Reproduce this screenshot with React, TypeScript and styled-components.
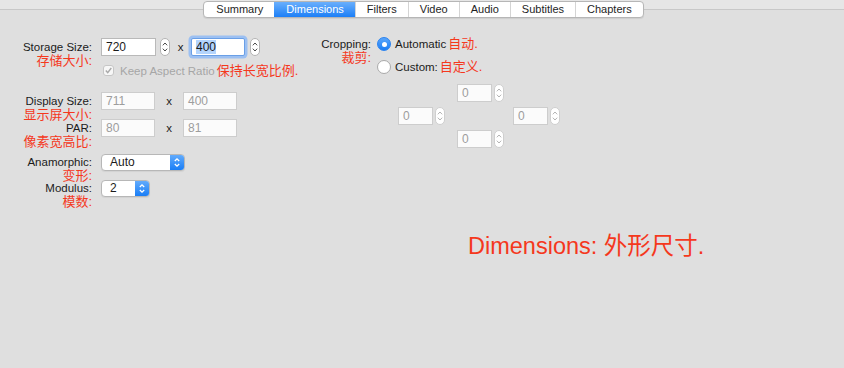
import React from 'react'
import styled, { createGlobalStyle } from 'styled-components'

const RED = '#f5381d'
const FONT = `"Liberation Sans", Arial, "Noto Sans CJK SC", sans-serif`

const GlobalStyle = createGlobalStyle`
  html, body {
    margin: 0;
    padding: 0;
  }
  body {
    background: #dfdfdf;
    font-family: ${FONT};
  }
`

const Window = styled.div`
  width: 844px;
  height: 368px;
  overflow: hidden;
  background: #dfdfdf;
  display: flex;
  flex-direction: column;
`

const TabStrip = styled.div`
  height: 19px;
  box-sizing: border-box;
  padding: 1px 0 0 3px;
  display: flex;
  justify-content: center;
  background: linear-gradient(
    to bottom,
    #e6e6e6 0,
    #e6e6e6 9px,
    #c8c8c8 9px,
    #c8c8c8 10px,
    #dfdfdf 10px
  );
`

const Segmented = styled.div`
  display: flex;
  height: 17px;
  box-sizing: border-box;
  border: 1px solid #b6b6b6;
  border-radius: 4px;
  background: #fff;
  overflow: hidden;
  box-shadow: 0 1px 1px rgba(0, 0, 0, 0.08);
`

const Tab = styled.div<{ $active?: boolean; $first?: boolean }>`
  padding: 0 11px;
  font-size: 11px;
  line-height: 15px;
  white-space: nowrap;
  color: ${p => (p.$active ? '#fff' : '#1e1e1e')};
  background: ${p =>
    p.$active ? 'linear-gradient(to bottom, #6aaffc, #1c7ff7)' : 'transparent'};
  border-left: 1px solid ${p => (p.$first || p.$active ? 'transparent' : '#d4d4d4')};
`

const Body = styled.div`
  display: flex;
  align-items: flex-start;
`

const FormColumn = styled.div`
  width: 310px;
  padding-top: 19px;
  display: flex;
  flex-direction: column;
`

const Row = styled.div<{ $mt?: number }>`
  display: flex;
  align-items: flex-start;
  margin-top: ${p => p.$mt ?? 0}px;
`

const LabelCell = styled.div<{ $w: number; $h: number; $mr: number }>`
  width: ${p => p.$w}px;
  height: ${p => p.$h}px;
  margin-right: ${p => p.$mr}px;
  flex-shrink: 0;
  text-align: right;
  white-space: nowrap;
`

const Label = styled.div<{ $h: number }>`
  font-size: 11.5px;
  line-height: ${p => p.$h}px;
  color: #1b1b1b;
`

const Caption = styled.div`
  margin-top: -2px;
  font-size: 13px;
  line-height: 14px;
  color: ${RED};
`

const Field = styled.div`
  display: flex;
  flex-direction: column;
`

const FieldLine = styled.div`
  display: flex;
  align-items: center;
  height: 18px;
`

const TextBox = styled.div<{ $w: number; $disabled?: boolean; $focused?: boolean }>`
  width: ${p => p.$w}px;
  height: 18px;
  box-sizing: border-box;
  padding-left: 4px;
  border: 1px solid ${p => (p.$disabled ? '#cdcdcd' : p.$focused ? '#6a9fe6' : '#b9b9b9')};
  background: ${p => (p.$disabled ? '#fbfbfb' : '#fff')};
  box-shadow: ${p => (p.$focused ? '0 0 0 2.5px #9cc0f2' : 'none')};
  border-radius: ${p => (p.$focused ? '2px' : '0')};
  font-size: 12px;
  line-height: 16px;
  color: ${p => (p.$disabled ? '#9d9d9d' : '#1b1b1b')};
`

const Selected = styled.span`
  background: #b3d4fd;
`

const StepperShell = styled.span<{ $ml: number; $disabled?: boolean }>`
  display: inline-flex;
  width: 10px;
  height: 18px;
  box-sizing: border-box;
  margin-left: ${p => p.$ml}px;
  border: 1px solid ${p => (p.$disabled ? '#cfcfcf' : '#b4b4b4')};
  border-radius: 5px;
  background: #fff;
  color: ${p => (p.$disabled ? '#b4b4b4' : '#4a4a4a')};
`

const Stepper = ({ ml, disabled }: { ml: number; disabled?: boolean }) => (
  <StepperShell $ml={ml} $disabled={disabled}>
    <svg width="8" height="16" viewBox="0 0 8 16" fill="none" stroke="currentColor" strokeWidth="1">
      <path d="M1.8 6.3 L4 4 L6.2 6.3" />
      <path d="M1.8 9.7 L4 12 L6.2 9.7" />
    </svg>
  </StepperShell>
)

const XSep = styled.span<{ $w: number }>`
  width: ${p => p.$w}px;
  text-align: center;
  font-size: 11.5px;
  color: #1b1b1b;
`

const CheckLine = styled.div`
  display: flex;
  align-items: center;
  height: 13px;
  margin-top: 8px;
  white-space: nowrap;
`

const CheckBox = styled.span`
  display: inline-flex;
  width: 11px;
  height: 11px;
  box-sizing: border-box;
  margin-left: 2px;
  border: 1px solid #c6c6c6;
  border-radius: 3px;
  background: #f7f7f7;
  color: #a9a9a9;
`

const MutedText = styled.span`
  margin-left: 6px;
  font-size: 11.5px;
  color: #a6a6a6;
`

const RedText = styled.span`
  margin-left: 2px;
  font-size: 13px;
  line-height: 18px;
  color: ${RED};
`

const Popup = styled.div<{ $w: number }>`
  display: flex;
  width: ${p => p.$w}px;
  height: 17px;
  box-sizing: border-box;
  border: 1px solid #b7b7b7;
  border-radius: 4px;
  background: #fff;
  overflow: hidden;
  box-shadow: 0 1px 1px rgba(0, 0, 0, 0.06);
`

const PopupValue = styled.span`
  flex: 1;
  padding-left: 8px;
  font-size: 12px;
  line-height: 15px;
  color: #1b1b1b;
`

const PopupArrows = styled.span`
  display: flex;
  align-items: center;
  justify-content: center;
  width: 14px;
  background: linear-gradient(to bottom, #62abfc, #1a7ef6);
  color: #fff;
`

const PopupButton = ({ w, value }: { w: number; value: string }) => (
  <Popup $w={w}>
    <PopupValue>{value}</PopupValue>
    <PopupArrows>
      <svg width="8" height="13" viewBox="0 0 8 13" fill="none" stroke="currentColor" strokeWidth="1.3">
        <path d="M1.8 5 L4 2.8 L6.2 5" />
        <path d="M1.8 8 L4 10.2 L6.2 8" />
      </svg>
    </PopupArrows>
  </Popup>
)

const CropColumn = styled.div`
  padding-top: 16px;
  display: flex;
  align-items: flex-start;
`

const RadioColumn = styled.div`
  display: flex;
  flex-direction: column;
`

const RadioLine = styled.div<{ $mt?: number }>`
  display: flex;
  align-items: center;
  height: 18px;
  margin-top: ${p => p.$mt ?? 0}px;
  white-space: nowrap;
`

const RadioDot = styled.span<{ $on?: boolean }>`
  display: inline-flex;
  align-items: center;
  justify-content: center;
  width: 14px;
  height: 14px;
  box-sizing: border-box;
  border-radius: 50%;
  border: 1px solid ${p => (p.$on ? '#2a83f0' : '#a9a9a9')};
  background: ${p => (p.$on ? 'linear-gradient(to bottom, #5aa6fb, #1a7df5)' : '#fff')};
  &::after {
    content: '';
    display: ${p => (p.$on ? 'block' : 'none')};
    width: 5px;
    height: 5px;
    border-radius: 50%;
    background: #fff;
  }
`

const RadioText = styled.span`
  margin-left: 4px;
  font-size: 11.5px;
  color: #1b1b1b;
`

const CropGrid = styled.div`
  display: grid;
  grid-template-columns: 59px 56px 47px;
  grid-template-rows: 23px 23px 18px;
  margin: 8px 0 0 21px;
`

const CropCell = styled.div<{ $col: number; $row: number }>`
  display: flex;
  grid-column: ${p => p.$col};
  grid-row: ${p => p.$row};
`

const Annotation = styled.div`
  margin-top: 35px;
  padding-left: 468px;
  font-size: 23.5px;
  line-height: 28px;
  color: ${RED};
  white-space: nowrap;
`

const tabs = ['Summary', 'Dimensions', 'Filters', 'Video', 'Audio', 'Subtitles', 'Chapters']

const cropCells = [
  { col: 2, row: 1 },
  { col: 1, row: 2 },
  { col: 3, row: 2 },
  { col: 2, row: 3 }
]

export default function App() {
  return (
    <Window>
      <GlobalStyle />
      <TabStrip>
        <Segmented>
          {tabs.map((t, i) => (
            <Tab key={t} $first={i === 0} $active={t === 'Dimensions'}>
              {t}
            </Tab>
          ))}
        </Segmented>
      </TabStrip>

      <Body>
        <FormColumn>
          <Row>
            <LabelCell $w={92} $h={18} $mr={9}>
              <Label $h={18}>Storage Size:</Label>
              <Caption>存储大小:</Caption>
            </LabelCell>
            <Field>
              <FieldLine>
                <TextBox $w={55}>720</TextBox>
                <Stepper ml={4} />
                <XSep $w={21}>x</XSep>
                <TextBox $w={54} $focused>
                  <Selected>400</Selected>
                </TextBox>
                <Stepper ml={5} />
              </FieldLine>
              <CheckLine>
                <CheckBox>
                  <svg width="9" height="9" viewBox="0 0 9 9" fill="none" stroke="currentColor" strokeWidth="1.4">
                    <path d="M1.8 4.6 L3.7 6.6 L7.3 2" />
                  </svg>
                </CheckBox>
                <MutedText>Keep Aspect Ratio</MutedText>
                <RedText>保持长宽比例.</RedText>
              </CheckLine>
            </Field>
          </Row>

          <Row $mt={15}>
            <LabelCell $w={92} $h={18} $mr={9}>
              <Label $h={18}>Display Size:</Label>
              <Caption>显示屏大小:</Caption>
            </LabelCell>
            <FieldLine>
              <TextBox $w={54} $disabled>711</TextBox>
              <XSep $w={28}>x</XSep>
              <TextBox $w={54} $disabled>400</TextBox>
            </FieldLine>
          </Row>

          <Row $mt={9}>
            <LabelCell $w={92} $h={18} $mr={9}>
              <Label $h={18}>PAR:</Label>
              <Caption>像素宽高比:</Caption>
            </LabelCell>
            <FieldLine>
              <TextBox $w={54} $disabled>80</TextBox>
              <XSep $w={28}>x</XSep>
              <TextBox $w={54} $disabled>81</TextBox>
            </FieldLine>
          </Row>

          <Row $mt={17}>
            <LabelCell $w={92} $h={17} $mr={9}>
              <Label $h={17}>Anamorphic:</Label>
              <Caption>变形:</Caption>
            </LabelCell>
            <PopupButton w={84} value="Auto" />
          </Row>

          <Row $mt={9}>
            <LabelCell $w={92} $h={17} $mr={9}>
              <Label $h={17}>Modulus:</Label>
              <Caption>模数:</Caption>
            </LabelCell>
            <PopupButton w={49} value="2" />
          </Row>
        </FormColumn>

        <CropColumn>
          <LabelCell $w={61} $h={18} $mr={6}>
            <Label $h={18}>Cropping:</Label>
            <Caption>裁剪:</Caption>
          </LabelCell>
          <RadioColumn>
            <RadioLine>
              <RadioDot $on />
              <RadioText>Automatic</RadioText>
              <RedText>自动.</RedText>
            </RadioLine>
            <RadioLine $mt={5}>
              <RadioDot />
              <RadioText>Custom:</RadioText>
              <RedText>自定义.</RedText>
            </RadioLine>
            <CropGrid>
              {cropCells.map(c => (
                <CropCell key={`${c.col}-${c.row}`} $col={c.col} $row={c.row}>
                  <TextBox $w={35} $disabled>0</TextBox>
                  <Stepper ml={2} disabled />
                </CropCell>
              ))}
            </CropGrid>
          </RadioColumn>
        </CropColumn>
      </Body>

      <Annotation>Dimensions: 外形尺寸.</Annotation>
    </Window>
  )
}
